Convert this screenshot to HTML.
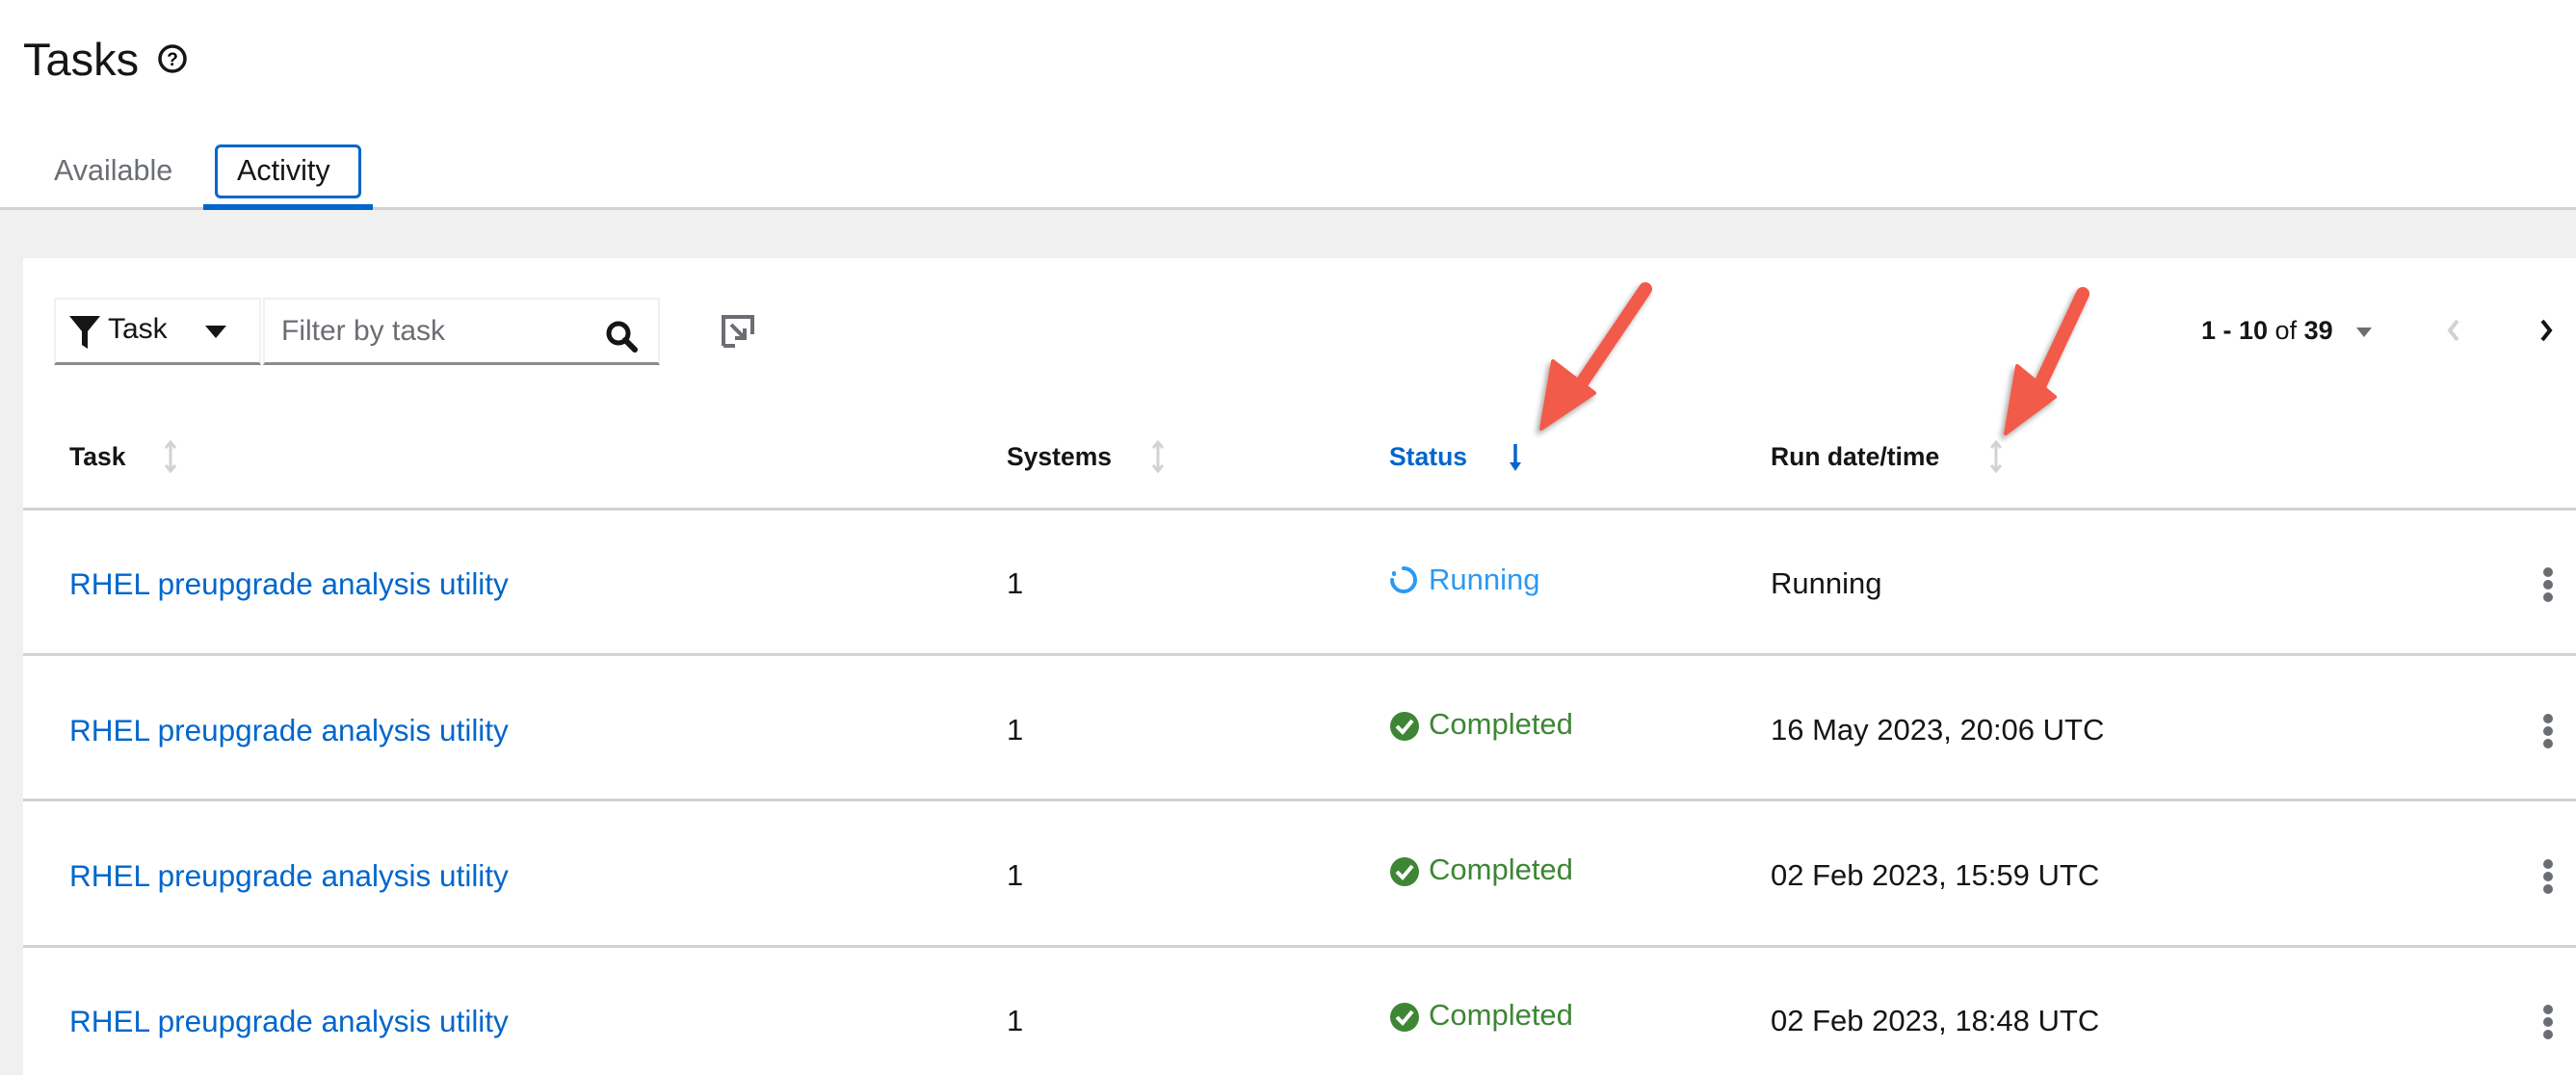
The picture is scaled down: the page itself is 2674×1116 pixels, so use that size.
<!DOCTYPE html>
<html><head><meta charset="utf-8"><style>
*{margin:0;padding:0;box-sizing:border-box}
body{width:2674px;height:1116px;overflow:hidden;background:#f0f0f0;font-family:"Liberation Sans",sans-serif;color:#151515;position:relative}
.top{position:absolute;left:0;top:0;width:2674px;height:218px;background:#fff;border-bottom:3px solid #d2d2d2}
.abs{position:absolute;white-space:nowrap}
.card{position:absolute;left:24px;top:268px;right:0;bottom:0;background:#fff}
.row{position:absolute;left:24px;right:0;height:3px;background:#d2d2d2}
.link{color:#0066cc;font-size:31.5px}
.cell{font-size:31px}
.th{font-size:26.5px;font-weight:bold}
</style></head><body>
<div class="top"></div>
<div class="abs" style="left:24px;top:34px;font-size:47px;font-weight:500">Tasks</div>
<svg class="abs" style="left:163px;top:45px" width="32" height="32" viewBox="0 0 32 32"><circle cx="16" cy="16" r="13" fill="none" stroke="#151515" stroke-width="3.5"/><text x="16" y="23" font-size="19" font-weight="bold" text-anchor="middle" font-family="Liberation Sans">?</text></svg>
<div class="abs" style="left:56px;top:160px;font-size:30.5px;color:#6a6e73">Available</div>
<div class="abs" style="left:223px;top:150px;width:152px;height:56px;border:3px solid #0066cc;border-radius:6px"></div>
<div class="abs" style="left:246px;top:160px;font-size:30.5px">Activity</div>
<div class="abs" style="left:211px;top:212px;width:176px;height:6px;background:#0066cc"></div>

<div class="card"></div>
<div class="abs" style="left:56px;top:309px;width:215px;height:70px;border:2px solid #f0f0f0;border-bottom:3px solid #8a8d90"></div>
<svg class="abs" style="left:71px;top:327px" width="34" height="36" viewBox="0 0 34 36"><path d="M1 1H33L20 17V35L14 31V17Z" fill="#151515"/></svg>
<div class="abs" style="left:112px;top:325px;font-size:30px">Task</div>
<svg class="abs" style="left:212px;top:337px" width="24" height="16"><path d="M1 1H23L12 14Z" fill="#151515"/></svg>
<div class="abs" style="left:273px;top:309px;width:412px;height:70px;border:2px solid #f0f0f0;border-bottom:3px solid #8a8d90"></div>
<div class="abs" style="left:292px;top:327px;font-size:30px;color:#6a6e73">Filter by task</div>
<svg class="abs" style="left:628px;top:332px" width="34" height="34" viewBox="0 0 34 34"><circle cx="14" cy="14" r="10" fill="none" stroke="#151515" stroke-width="5"/><path d="M21 21L31 31" stroke="#151515" stroke-width="6" stroke-linecap="round"/></svg>
<svg class="abs" style="left:749px;top:327px" width="34" height="34" viewBox="0 0 34 34"><path d="M2 32V2H32V20" fill="none" stroke="#6a6e73" stroke-width="4"/><path d="M10 10L24 24M24 14V24H14" fill="none" stroke="#6a6e73" stroke-width="4"/><path d="M2 32H14" stroke="#6a6e73" stroke-width="4"/></svg>
<div class="abs" style="left:2285px;top:328px;font-size:27px"><b>1 - 10</b> of <b>39</b></div>
<svg class="abs" style="left:2445px;top:339px" width="18" height="12"><path d="M1 1H17L9 11Z" fill="#6a6e73"/></svg>
<svg class="abs" style="left:2540px;top:331px" width="14" height="24"><path d="M11 2L3 12L11 22" fill="none" stroke="#d2d2d2" stroke-width="4"/></svg>
<svg class="abs" style="left:2636px;top:331px" width="14" height="24"><path d="M3 2L11 12L3 22" fill="none" stroke="#151515" stroke-width="4"/></svg>

<div class="abs th" style="left:72px;top:459px">Task</div>
<div class="abs th" style="left:1045px;top:459px">Systems</div>
<div class="abs th" style="left:1442px;top:459px;color:#0066cc">Status</div>
<div class="abs th" style="left:1838px;top:459px">Run date/time</div>
<svg class="abs" style="left:171px;top:457px" width="12" height="34"><path d="M6 2V32M1 8L6 2L11 8M1 26L6 32L11 26" fill="none" stroke="#d2d2d2" stroke-width="3"/></svg>
<svg class="abs" style="left:1196px;top:457px" width="12" height="34"><path d="M6 2V32M1 8L6 2L11 8M1 26L6 32L11 26" fill="none" stroke="#d2d2d2" stroke-width="3"/></svg>
<svg class="abs" style="left:2066px;top:457px" width="12" height="34"><path d="M6 2V32M1 8L6 2L11 8M1 26L6 32L11 26" fill="none" stroke="#d2d2d2" stroke-width="3"/></svg>
<svg class="abs" style="left:1566px;top:460px" width="14" height="30"><path d="M7 1V26" stroke="#0066cc" stroke-width="3.5"/><path d="M1 20L7 29L13 20Z" fill="#0066cc"/></svg>
<div class="row" style="top:527px"></div>
<div class="row" style="top:678px"></div>
<div class="row" style="top:829px"></div>
<div class="row" style="top:981px"></div>

<div class="abs link" style="left:72px;top:588px">RHEL preupgrade analysis utility</div>
<div class="abs cell" style="left:1045px;top:588px">1</div>
<svg class="abs" style="left:1442px;top:587px" width="30" height="30" viewBox="0 0 30 30"><path d="M15 3A12 12 0 1 1 3 15" fill="none" stroke="#2b9af3" stroke-width="4" stroke-linecap="round"/><path d="M5 8L5 9" stroke="#2b9af3" stroke-width="4" stroke-linecap="round"/></svg>
<div class="abs cell" style="left:1483px;top:584px;color:#2b9af3">Running</div>
<div class="abs cell" style="left:1838px;top:588px">Running</div>

<div class="abs link" style="left:72px;top:740px">RHEL preupgrade analysis utility</div>
<div class="abs cell" style="left:1045px;top:740px">1</div>
<div class="abs cell" style="left:1838px;top:740px">16 May 2023, 20:06 UTC</div>
<div class="abs link" style="left:72px;top:891px">RHEL preupgrade analysis utility</div>
<div class="abs cell" style="left:1045px;top:891px">1</div>
<div class="abs cell" style="left:1838px;top:891px">02 Feb 2023, 15:59 UTC</div>
<div class="abs link" style="left:72px;top:1042px">RHEL preupgrade analysis utility</div>
<div class="abs cell" style="left:1045px;top:1042px">1</div>
<div class="abs cell" style="left:1838px;top:1042px">02 Feb 2023, 18:48 UTC</div>

<svg class="abs" style="left:1442px;top:738px" width="32" height="32" viewBox="0 0 32 32"><circle cx="16" cy="16" r="15" fill="#3e8635"/><path d="M8 16L14 22L24 10" fill="none" stroke="#fff" stroke-width="4"/></svg>
<div class="abs cell" style="left:1483px;top:734px;color:#3e8635">Completed</div>
<svg class="abs" style="left:1442px;top:889px" width="32" height="32" viewBox="0 0 32 32"><circle cx="16" cy="16" r="15" fill="#3e8635"/><path d="M8 16L14 22L24 10" fill="none" stroke="#fff" stroke-width="4"/></svg>
<div class="abs cell" style="left:1483px;top:885px;color:#3e8635">Completed</div>
<svg class="abs" style="left:1442px;top:1040px" width="32" height="32" viewBox="0 0 32 32"><circle cx="16" cy="16" r="15" fill="#3e8635"/><path d="M8 16L14 22L24 10" fill="none" stroke="#fff" stroke-width="4"/></svg>
<div class="abs cell" style="left:1483px;top:1036px;color:#3e8635">Completed</div>

<svg class="abs" style="left:2638px;top:588px" width="14" height="40"><circle cx="7" cy="6" r="5" fill="#6a6e73"/><circle cx="7" cy="19" r="5" fill="#6a6e73"/><circle cx="7" cy="32" r="5" fill="#6a6e73"/></svg>
<svg class="abs" style="left:2638px;top:740px" width="14" height="40"><circle cx="7" cy="6" r="5" fill="#6a6e73"/><circle cx="7" cy="19" r="5" fill="#6a6e73"/><circle cx="7" cy="32" r="5" fill="#6a6e73"/></svg>
<svg class="abs" style="left:2638px;top:891px" width="14" height="40"><circle cx="7" cy="6" r="5" fill="#6a6e73"/><circle cx="7" cy="19" r="5" fill="#6a6e73"/><circle cx="7" cy="32" r="5" fill="#6a6e73"/></svg>
<svg class="abs" style="left:2638px;top:1042px" width="14" height="40"><circle cx="7" cy="6" r="5" fill="#6a6e73"/><circle cx="7" cy="19" r="5" fill="#6a6e73"/><circle cx="7" cy="32" r="5" fill="#6a6e73"/></svg>

<svg class="abs" style="left:0;top:0" width="2674" height="1116">
<defs><filter id="sh"><feDropShadow dx="-3" dy="4" stdDeviation="3" flood-color="#000" flood-opacity="0.35"/></filter></defs>
<g filter="url(#sh)" fill="#f25a4a" stroke="#f25a4a" stroke-linecap="round">
<path d="M1708 300L1628 418" stroke-width="14" fill="none"/>
<path d="M1612 375L1600 445L1655 408Z" stroke-width="4" stroke-linejoin="round"/>
<path d="M2162 305L2108 420" stroke-width="14" fill="none"/>
<path d="M2094 380L2082 450L2133 412Z" stroke-width="4" stroke-linejoin="round"/>
</g></svg>
</body></html>
